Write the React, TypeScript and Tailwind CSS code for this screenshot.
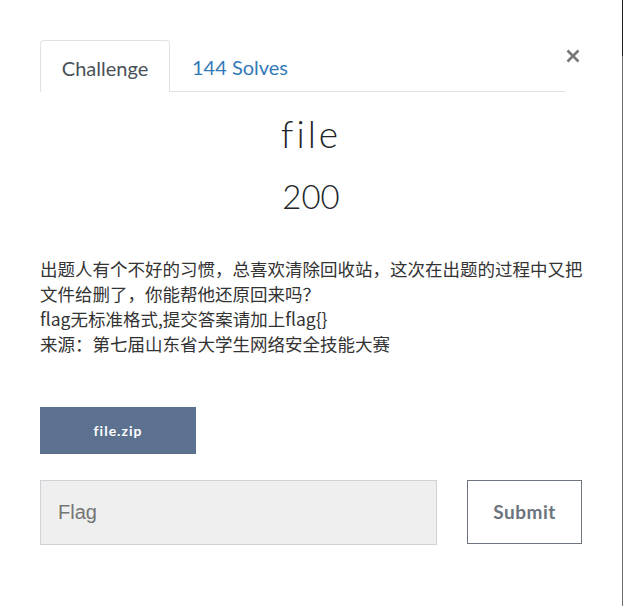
import React from "react";

const lato = { fontFamily: "Lato, 'Liberation Sans', sans-serif" };

export default function App() {
  return (
    <div className="relative h-[606px] w-[623px] overflow-hidden bg-white">
      {/* modal edge */}
      <div className="absolute right-0 top-0 h-full w-px bg-[#6e6e6e]" />
      <div className="absolute right-0 top-0 h-[56px] w-px bg-[#1c1c1c]" />

      <div className="pl-[40px] pr-[41px] pt-[40px]" style={lato}>
        <div className="flex items-start">
          <div className="flex h-[52px] w-[525px] items-stretch border-b border-[#dee2e6]">
            <div className="-mb-px flex w-[130px] items-center justify-center rounded-t-[4px] border border-b-0 border-[#dee2e6] bg-white pt-[3px] text-[20px] text-[#495057]">
              Challenge
            </div>
            <div className="flex items-center pl-[22px] pt-[3px] text-[20px] text-[#337ab7]">
              144 Solves
            </div>
          </div>
          <button className="ml-[1px] mt-[9px] flex h-[14px] w-[14px] items-center justify-center">
            <svg width="14" height="14" viewBox="0 0 14 14">
              <path d="M1.5 1.5 L12.5 12.5 M12.5 1.5 L1.5 12.5" stroke="#777" strokeWidth="2.6" />
            </svg>
          </button>
        </div>

        <div className="mt-[18px] text-center text-[37px] font-light leading-[48px] tracking-[3px] text-[#212529] [font-variant-ligatures:none]">
          file
        </div>
        <div className="mt-[18px] text-center text-[33px] font-light leading-[40px] text-[#212529]">
          200
        </div>

        <p
          className="mt-[40px] w-[548px] text-[17.5px] leading-[25px] text-[#333]"
          style={{ fontFamily: "'Noto Sans CJK SC', 'Microsoft YaHei', sans-serif" }}
        >
          出题人有个不好的习惯，总喜欢清除回收站，这次在出题的过程中又把文件给删了，你能帮他还原回来吗？
          <br />
          flag无标准格式,提交答案请加上flag{"{}"}
          <br />
          来源：第七届山东省大学生网络安全技能大赛
        </p>

        <button className="mt-[51px] flex h-[47px] w-[156px] items-center justify-center bg-[#5c7190] text-[14px] font-bold tracking-[1px] text-white">
          file.zip
        </button>

        <div className="mt-[26px] flex items-start">
          <input
            placeholder="Flag"
            className="h-[65px] w-[397px] border border-[#cfd3d8] bg-[#efefef] pl-[17px] text-[20px] text-[#495057] outline-none placeholder:text-[#757575]"
            style={{ fontFamily: "'Liberation Sans', Arial, sans-serif" }}
          />
          <button className="ml-[30px] flex h-[64px] w-[115px] items-center justify-center border border-[#6c757d] text-[19px] font-bold tracking-[0.5px] text-[#6c757d]">
            Submit
          </button>
        </div>
      </div>
    </div>
  );
}
